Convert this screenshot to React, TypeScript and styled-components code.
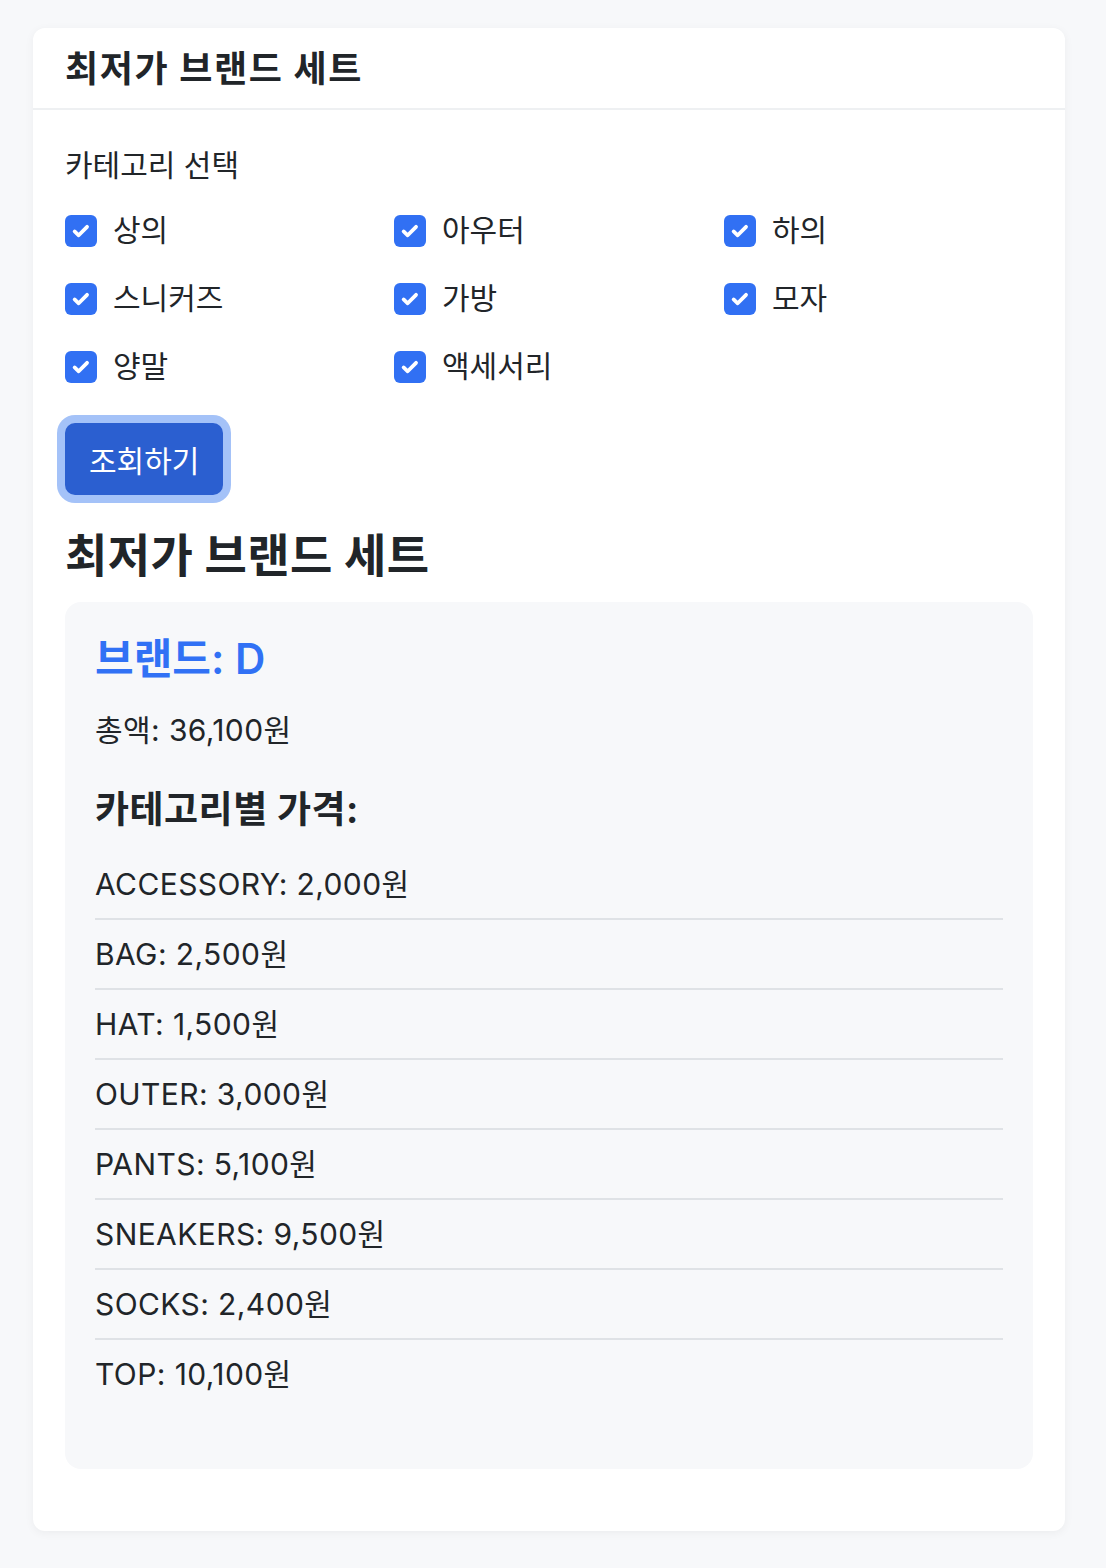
import React, { useState } from "react";
import styled, { createGlobalStyle } from "styled-components";

const Global = createGlobalStyle`
  html, body { margin: 0; padding: 0; background: #f7f8fa; }
  body {
    font-family: Inter, "Noto Sans CJK KR", "Noto Sans", sans-serif;
    color: #212529;
  }
  * { box-sizing: border-box; }
`;

const Page = styled.div`
  padding: 28px 41px 38px 33px;
`;

const Card = styled.section`
  background: #ffffff;
  border-radius: 12px;
  box-shadow: 0 2px 10px rgba(0, 0, 0, 0.05);
`;

const CardHeader = styled.header`
  height: 82px;
  padding: 0 32px 4px;
  display: flex;
  align-items: center;
  border-bottom: 2px solid #eef0f2;
`;

const HeaderTitle = styled.h1`
  margin: 0;
  font-size: 36px;
  font-weight: 700;
  letter-spacing: 1.6px;
`;

const CardBody = styled.div`
  padding: 33px 32px 62px;
  display: flex;
  flex-direction: column;
`;

const SectionLabel = styled.div`
  font-size: 30px;
  line-height: 45px;
`;

const CheckGrid = styled.div`
  margin-top: 20px;
  display: grid;
  grid-template-columns: 329px 330px 1fr;
  row-gap: 23px;
`;

const CheckItem = styled.label`
  display: flex;
  align-items: center;
  gap: 16px;
  font-size: 30px;
  line-height: 45px;
`;

const Box = styled.span`
  width: 32px;
  height: 32px;
  border-radius: 6px;
  background: #3170f3;
  display: inline-flex;
  align-items: center;
  justify-content: center;
  flex: none;
`;

const ButtonRow = styled.div`
  margin-top: 34px;
  display: flex;
`;

const PrimaryButton = styled.button`
  height: 72px;
  padding: 0 24px;
  border: none;
  border-radius: 10px;
  background: #2b5fd0;
  color: #ffffff;
  font-family: inherit;
  font-size: 30px;
  box-shadow: 0 0 0 8px #a4c2f8;
  cursor: pointer;
`;

const ResultTitle = styled.h2`
  margin: 33px 0 0;
  font-size: 46px;
  line-height: 55px;
  font-weight: 700;
  letter-spacing: 0.4px;
`;

const Panel = styled.div`
  margin-top: 19px;
  background: #f7f8fa;
  border-radius: 16px;
  padding: 30px 30px 61px;
`;

const BrandName = styled.h3`
  margin: 0;
  font-size: 42px;
  line-height: 53px;
  font-weight: 600;
  color: #3171f5;
`;

const Total = styled.p`
  margin: 23px 0 0;
  font-size: 30px;
  line-height: 45px;
  letter-spacing: 0.4px;
`;

const SubTitle = styled.h4`
  margin: 35px 0 0;
  font-size: 37px;
  line-height: 43px;
  font-weight: 700;
  letter-spacing: 0.5px;
`;

const PriceList = styled.ul`
  margin: 19px 0 0;
  padding: 0;
  list-style: none;
`;

const PriceItem = styled.li`
  font-size: 30px;
  line-height: 45px;
  padding: 11.5px 0;
  letter-spacing: 0.4px;
  border-bottom: 2px solid #dfe2e6;
  &:last-child { border-bottom: none; }
`;

const Check = () => (
  <svg width="22" height="22" viewBox="0 0 20 20" fill="none">
    <path d="M4.2 10.4l3.7 3.5 7.6-7.7" stroke="#fff" strokeWidth="3.4" strokeLinecap="round" strokeLinejoin="round" />
  </svg>
);

const categories = ["상의", "아우터", "하의", "스니커즈", "가방", "모자", "양말", "액세서리"];
const prices: [string, string][] = [
  ["ACCESSORY", "2,000"],
  ["BAG", "2,500"],
  ["HAT", "1,500"],
  ["OUTER", "3,000"],
  ["PANTS", "5,100"],
  ["SNEAKERS", "9,500"],
  ["SOCKS", "2,400"],
  ["TOP", "10,100"],
];

export default function App() {
  const [checked] = useState(categories.map(() => true));
  return (
    <Page>
      <Global />
      <Card>
        <CardHeader>
          <HeaderTitle>최저가 브랜드 세트</HeaderTitle>
        </CardHeader>
        <CardBody>
          <SectionLabel>카테고리 선택</SectionLabel>
          <CheckGrid>
            {categories.map((c, i) => (
              <CheckItem key={c}>
                <Box>{checked[i] && <Check />}</Box>
                {c}
              </CheckItem>
            ))}
          </CheckGrid>
          <ButtonRow>
            <PrimaryButton>조회하기</PrimaryButton>
          </ButtonRow>
          <ResultTitle>최저가 브랜드 세트</ResultTitle>
          <Panel>
            <BrandName>브랜드: D</BrandName>
            <Total>총액: 36,100원</Total>
            <SubTitle>카테고리별 가격:</SubTitle>
            <PriceList>
              {prices.map(([k, v]) => (
                <PriceItem key={k}>
                  {k}: {v}원
                </PriceItem>
              ))}
            </PriceList>
          </Panel>
        </CardBody>
      </Card>
    </Page>
  );
}
